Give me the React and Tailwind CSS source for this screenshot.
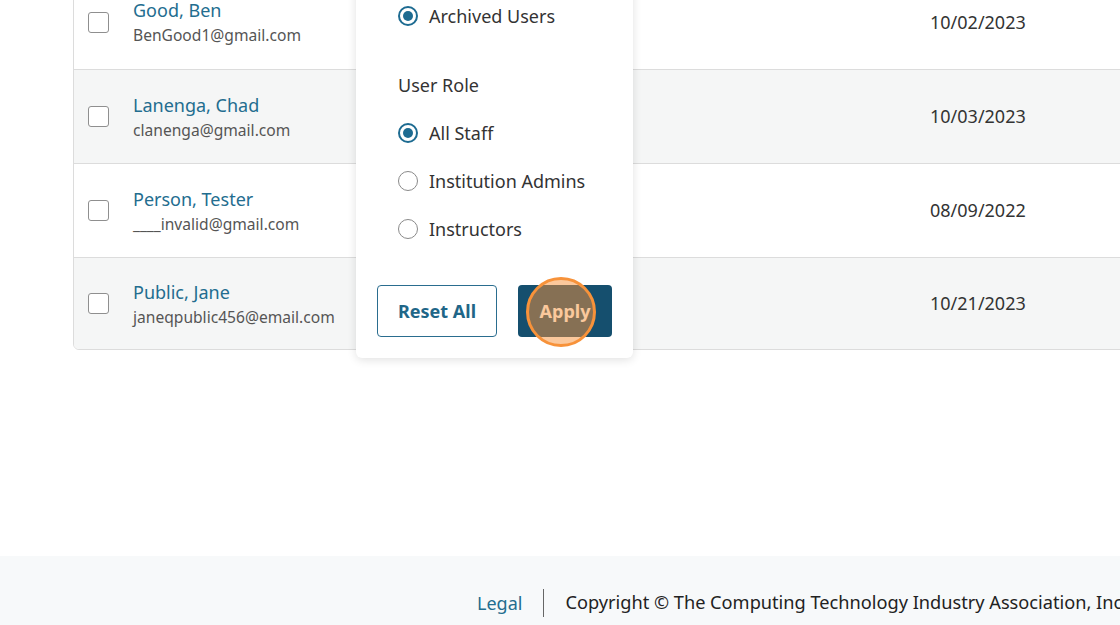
import React from "react";

const users = [
  { name: "Good, Ben", email: "BenGood1@gmail.com", date: "10/02/2023" },
  { name: "Lanenga, Chad", email: "clanenga@gmail.com", date: "10/03/2023" },
  { name: "Person, Tester", email: "____invalid@gmail.com", date: "08/09/2022" },
  { name: "Public, Jane", email: "janeqpublic456@email.com", date: "10/21/2023" },
];

function Radio({ checked, label }) {
  return (
    <label className="flex items-center gap-[11px] h-[48px] cursor-pointer">
      <span
        className={`flex items-center justify-center w-[20px] h-[20px] rounded-full ${
          checked ? "border-2 border-[#1d6b91]" : "border border-[#8a8a8a]"
        } bg-white`}
      >
        {checked && <span className="w-[10px] h-[10px] rounded-full bg-[#1d6b91]" />}
      </span>
      <span className="text-[18px] text-[#333]">{label}</span>
    </label>
  );
}

function FilterPopover() {
  return (
    <div className="absolute left-[356px] top-[-40px] w-[277px] bg-white rounded-[6px] shadow-[0_2px_10px_rgba(0,0,0,0.12)] px-[21px] pb-[21px] z-10">
      <div className="pl-[21px] pt-[32px]">
        <Radio checked label="Archived Users" />
        <div className="h-[69px] pt-[32px] text-[18px] text-[#333]">User Role</div>
        <Radio checked label="All Staff" />
        <Radio label="Institution Admins" />
        <Radio label="Instructors" />
      </div>
      <div className="flex gap-[21px] mt-[32px]">
        <button className="w-[120px] h-[52px] rounded-[4px] border border-[#2a6d8f] text-[#1f6688] text-[18px] font-bold">
          Reset All
        </button>
        <div className="relative">
          <button className="w-[94px] h-[52px] rounded-[4px] bg-[#154f6e] text-white text-[18px] font-bold">
            Apply
          </button>
          <span className="absolute left-[8px] top-[-8px] w-[70px] h-[70px] rounded-full border-[3px] border-[#f7923a] bg-[rgba(247,146,58,0.5)] pointer-events-none" />
        </div>
      </div>
    </div>
  );
}

export default function App() {
  return (
    <div
      className="w-[1120px] h-[625px] overflow-hidden bg-white flex flex-col"
      style={{ fontFamily: '"Noto Sans", "Open Sans", sans-serif' }}
    >
      <div className="relative h-[556px] shrink-0">
        <div className="ml-[73px] w-[1100px] -mt-[26px] border border-[#dcdcdc] rounded-b-[6px] overflow-hidden">
          {users.map((u, i) => (
            <div
              key={u.email}
              className={`flex items-center ${i === 3 ? "h-[92px]" : "h-[94px]"} ${
                i > 0 ? "border-t border-[#dcdcdc]" : ""
              } ${i % 2 === 1 ? "bg-[#f5f6f6]" : "bg-white"}`}
            >
              <div className="w-[59px] pl-[14px]">
                <span className="block w-[21px] h-[21px] rounded-[3px] border border-[#8f8f8f] bg-white" />
              </div>
              <div className="w-[797px] flex flex-col gap-[2px]">
                <span className="text-[18px] leading-[24px] text-[#236d8f]">{u.name}</span>
                <span className="text-[15.6px] leading-[22px] text-[#555]">{u.email}</span>
              </div>
              <div className="text-[18px] text-[#333]">{u.date}</div>
            </div>
          ))}
        </div>
        <FilterPopover />
      </div>
      <footer className="flex-1 bg-[#f7f9fa] flex items-center pl-[477px] pt-[25px] whitespace-nowrap">
        <a className="shrink-0 text-[18px] text-[#236d8f]">Legal</a>
        <span className="shrink-0 mx-[21px] w-px h-[28px] bg-[#666]" />
        <span className="shrink-0 text-[18.2px] text-[#222]">
          Copyright © The Computing Technology Industry Association, Inc. All rights reserved.
        </span>
      </footer>
    </div>
  );
}
